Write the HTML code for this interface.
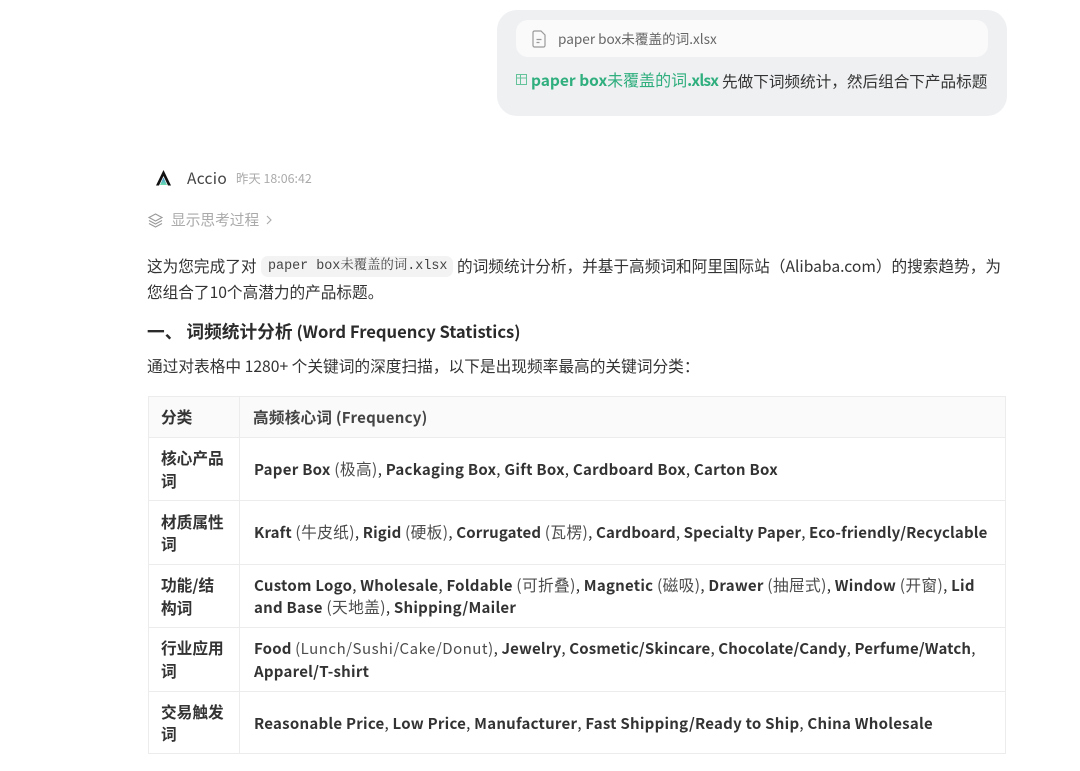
<!DOCTYPE html>
<html lang="zh"><head><meta charset="utf-8"><style>
html,body{margin:0;padding:0;background:#fff}
body{width:1080px;height:771px;position:relative;overflow:hidden;font-family:"Noto Sans CJK SC","Liberation Sans",sans-serif;color:#2b2b2b;font-size:15.65px}
.a{position:absolute;white-space:nowrap;line-height:22px}
.box{position:absolute}
b{font-weight:700;color:#333}
.n{color:#4c4c4c;font-size:15.7px;letter-spacing:.36px}
.l{color:#4c4c4c;font-size:15px;letter-spacing:.5px}
.t{letter-spacing:.25px;font-size:15px}
.c{font-size:15.7px;font-weight:700;color:#333}
</style></head><body>
<div class="box" style="left:497px;top:10px;width:510px;height:106px;border-radius:20px;background:#eff0f2"></div>
<div class="box" style="left:516px;top:20px;width:472px;height:37px;border-radius:12px;background:#fafafa"></div>
<svg class="box" style="left:531px;top:30px" width="16" height="18" viewBox="0 0 16 18" fill="none" stroke="#999" stroke-width="1.2"><path d="M2 2.500a1.500 1.500 0 0 1 1.500-1.500H10l4 4v10.500a1.500 1.500 0 0 1-1.500 1.500h-9A1.500 1.500 0 0 1 2 15.500z"/><path d="M5.500 9.500h5M5.500 12.500h3"/></svg>
<div class="a" style="left:558px;top:27px;font-size:13.6px;color:#666">paper box未覆盖的词.xlsx</div>
<svg class="box" style="left:516px;top:74px" width="12" height="12" viewBox="0 0 12 12" fill="none" stroke="#65c39b" stroke-width="1"><rect x=".5" y=".5" width="10" height="10"/><path d="M.5 4h10M4.500 .5v10"/></svg>
<div class="a" style="left:531px;top:68px;font-size:15.5px;color:#2fae7e;font-weight:700">paper box<span style="font-weight:400;font-size:16px">未覆盖的词</span><span style="letter-spacing:-.8px">.xlsx</span></div>
<div class="a" style="left:722px;top:70px;font-size:15.62px;color:#333">先做下词频统计，然后组合下产品标题</div>

<svg class="box" style="left:155px;top:169px" width="17" height="18" viewBox="0 0 17 18"><defs><linearGradient id="g" x1="0" y1="0" x2="0" y2="1"><stop offset="0" stop-color="#3a8fd0"/><stop offset="1" stop-color="#6fe0b0"/></linearGradient></defs><path d="M8.500 1 16 16.500h-3L8.500 7 4 16.500H1z" fill="#111"/><path d="M8.500 8.500 12 16H5z" fill="url(#g)"/></svg>
<div class="a" style="left:187px;top:167px;font-size:15.5px;color:#444;letter-spacing:.3px">Accio</div>
<div class="a" style="left:236px;top:167px;font-size:12.4px;color:#aaa">昨天 18:06:42</div>
<svg class="box" style="left:147px;top:212px" width="17" height="17" viewBox="0 0 17 17" fill="none" stroke="#999" stroke-width="1.100"><path d="M8.500 2 15 5.500 8.500 9 2 5.500z"/><path d="M2 8.500 8.500 12 15 8.500M2 11.500 8.500 15 15 11.500"/></svg>
<div class="a" style="left:171px;top:209px;font-size:14.7px;color:#aaa">显示思考过程</div>
<svg class="box" style="left:265px;top:214px" width="8" height="12" viewBox="0 0 8 12" fill="none" stroke="#aaa" stroke-width="1.100"><path d="M2 2l4 4-4 4"/></svg>

<div class="a" style="left:147px;top:255px;color:#333">这为您完成了对</div>
<div class="box" style="left:261px;top:256px;width:192px;height:21px;border-radius:7px;background:#f3f3f4"></div>
<div class="a" style="left:268px;top:256px;font-family:'Liberation Mono','Noto Serif CJK SC',monospace;font-size:13.4px;color:#444">paper box未覆盖的词.xlsx</div>
<div class="a" style="left:457px;top:255px;color:#333">的词频统计分析，并基于高频词和阿里国际站（Alibaba.com）的搜索趋势，为</div>
<div class="a" style="left:147px;top:281px;color:#333">您组合了10个高潜力的产品标题。</div>

<div class="a" style="left:147px;top:320px;font-size:17.7px;font-weight:700;color:#2b2b2b">一、 词频统计分析 <span style="font-size:16.6px">(Word Frequency Statistics)</span></div>
<div class="a" style="left:147px;top:355px;color:#333;font-size:15.7px">通过对表格中 1280+ 个关键词的深度扫描，以下是出现频率最高的关键词分类：</div>

<div class="box" style="left:148px;top:396px;width:858px;height:41px;background:#fafafa"></div>
<div class="box" style="left:148px;top:396px;width:858px;height:358px;border:1px solid #ececec;box-sizing:border-box"></div>
<div class="box" style="left:239px;top:396px;width:1px;height:358px;background:#ececec"></div>
<div class="box" style="left:148px;top:437px;width:858px;height:1px;background:#ececec"></div>
<div class="box" style="left:148px;top:500px;width:858px;height:1px;background:#ececec"></div>
<div class="box" style="left:148px;top:564px;width:858px;height:1px;background:#ececec"></div>
<div class="box" style="left:148px;top:627px;width:858px;height:1px;background:#ececec"></div>
<div class="box" style="left:148px;top:691px;width:858px;height:1px;background:#ececec"></div>

<div class="a c" style="left:161px;top:406px">分类</div>
<div class="a t" style="left:253px;top:406px"><b style="color:#444"><span style="font-size:15.6px">高频核心词</span> (Frequency)</b></div>

<div class="a c" style="left:161px;top:447px">核心产品</div>
<div class="a c" style="left:161px;top:470px">词</div>
<div class="a t" style="left:254px;top:458px;letter-spacing:.27px"><b>Paper Box</b> <span class="n">(极高)</span>, <b>Packaging Box</b>, <b>Gift Box</b>, <b>Cardboard Box</b>, <b>Carton Box</b></div>

<div class="a c" style="left:161px;top:511px">材质属性</div>
<div class="a c" style="left:161px;top:533px">词</div>
<div class="a t" style="left:254px;top:521px;letter-spacing:.15px"><b>Kraft</b> <span class="n">(牛皮纸)</span>, <b>Rigid</b> <span class="n">(硬板)</span>, <b>Corrugated</b> <span class="n">(瓦楞)</span>, <b>Cardboard</b>, <b>Specialty Paper</b>, <b>Eco-friendly/Recyclable</b></div>

<div class="a c" style="left:161px;top:574px">功能/结</div>
<div class="a c" style="left:161px;top:597px">构词</div>
<div class="a t" style="left:254px;top:574px"><b>Custom Logo</b>, <b>Wholesale</b>, <b>Foldable</b> <span class="n">(可折叠)</span>, <b>Magnetic</b> <span class="n">(磁吸)</span>, <b>Drawer</b> <span class="n">(抽屉式)</span>, <b>Window</b> <span class="n">(开窗)</span>, <b>Lid</b></div>
<div class="a t" style="left:254px;top:596px"><b>and Base</b> <span class="n">(天地盖)</span>, <b>Shipping/Mailer</b></div>

<div class="a c" style="left:161px;top:637px">行业应用</div>
<div class="a c" style="left:161px;top:660px">词</div>
<div class="a t" style="left:254px;top:638px;letter-spacing:.16px"><b>Food</b> <span class="l">(Lunch/Sushi/Cake/Donut)</span>, <b>Jewelry</b>, <b>Cosmetic/Skincare</b>, <b>Chocolate/Candy</b>, <b>Perfume/Watch</b>,</div>
<div class="a t" style="left:254px;top:661px"><b>Apparel/T-shirt</b></div>

<div class="a c" style="left:161px;top:701px">交易触发</div>
<div class="a c" style="left:161px;top:723px">词</div>
<div class="a t" style="left:254px;top:713px"><b>Reasonable Price</b>, <b>Low Price</b>, <b>Manufacturer</b>, <b>Fast Shipping/Ready to Ship</b>, <b>China Wholesale</b></div>
</body></html>
